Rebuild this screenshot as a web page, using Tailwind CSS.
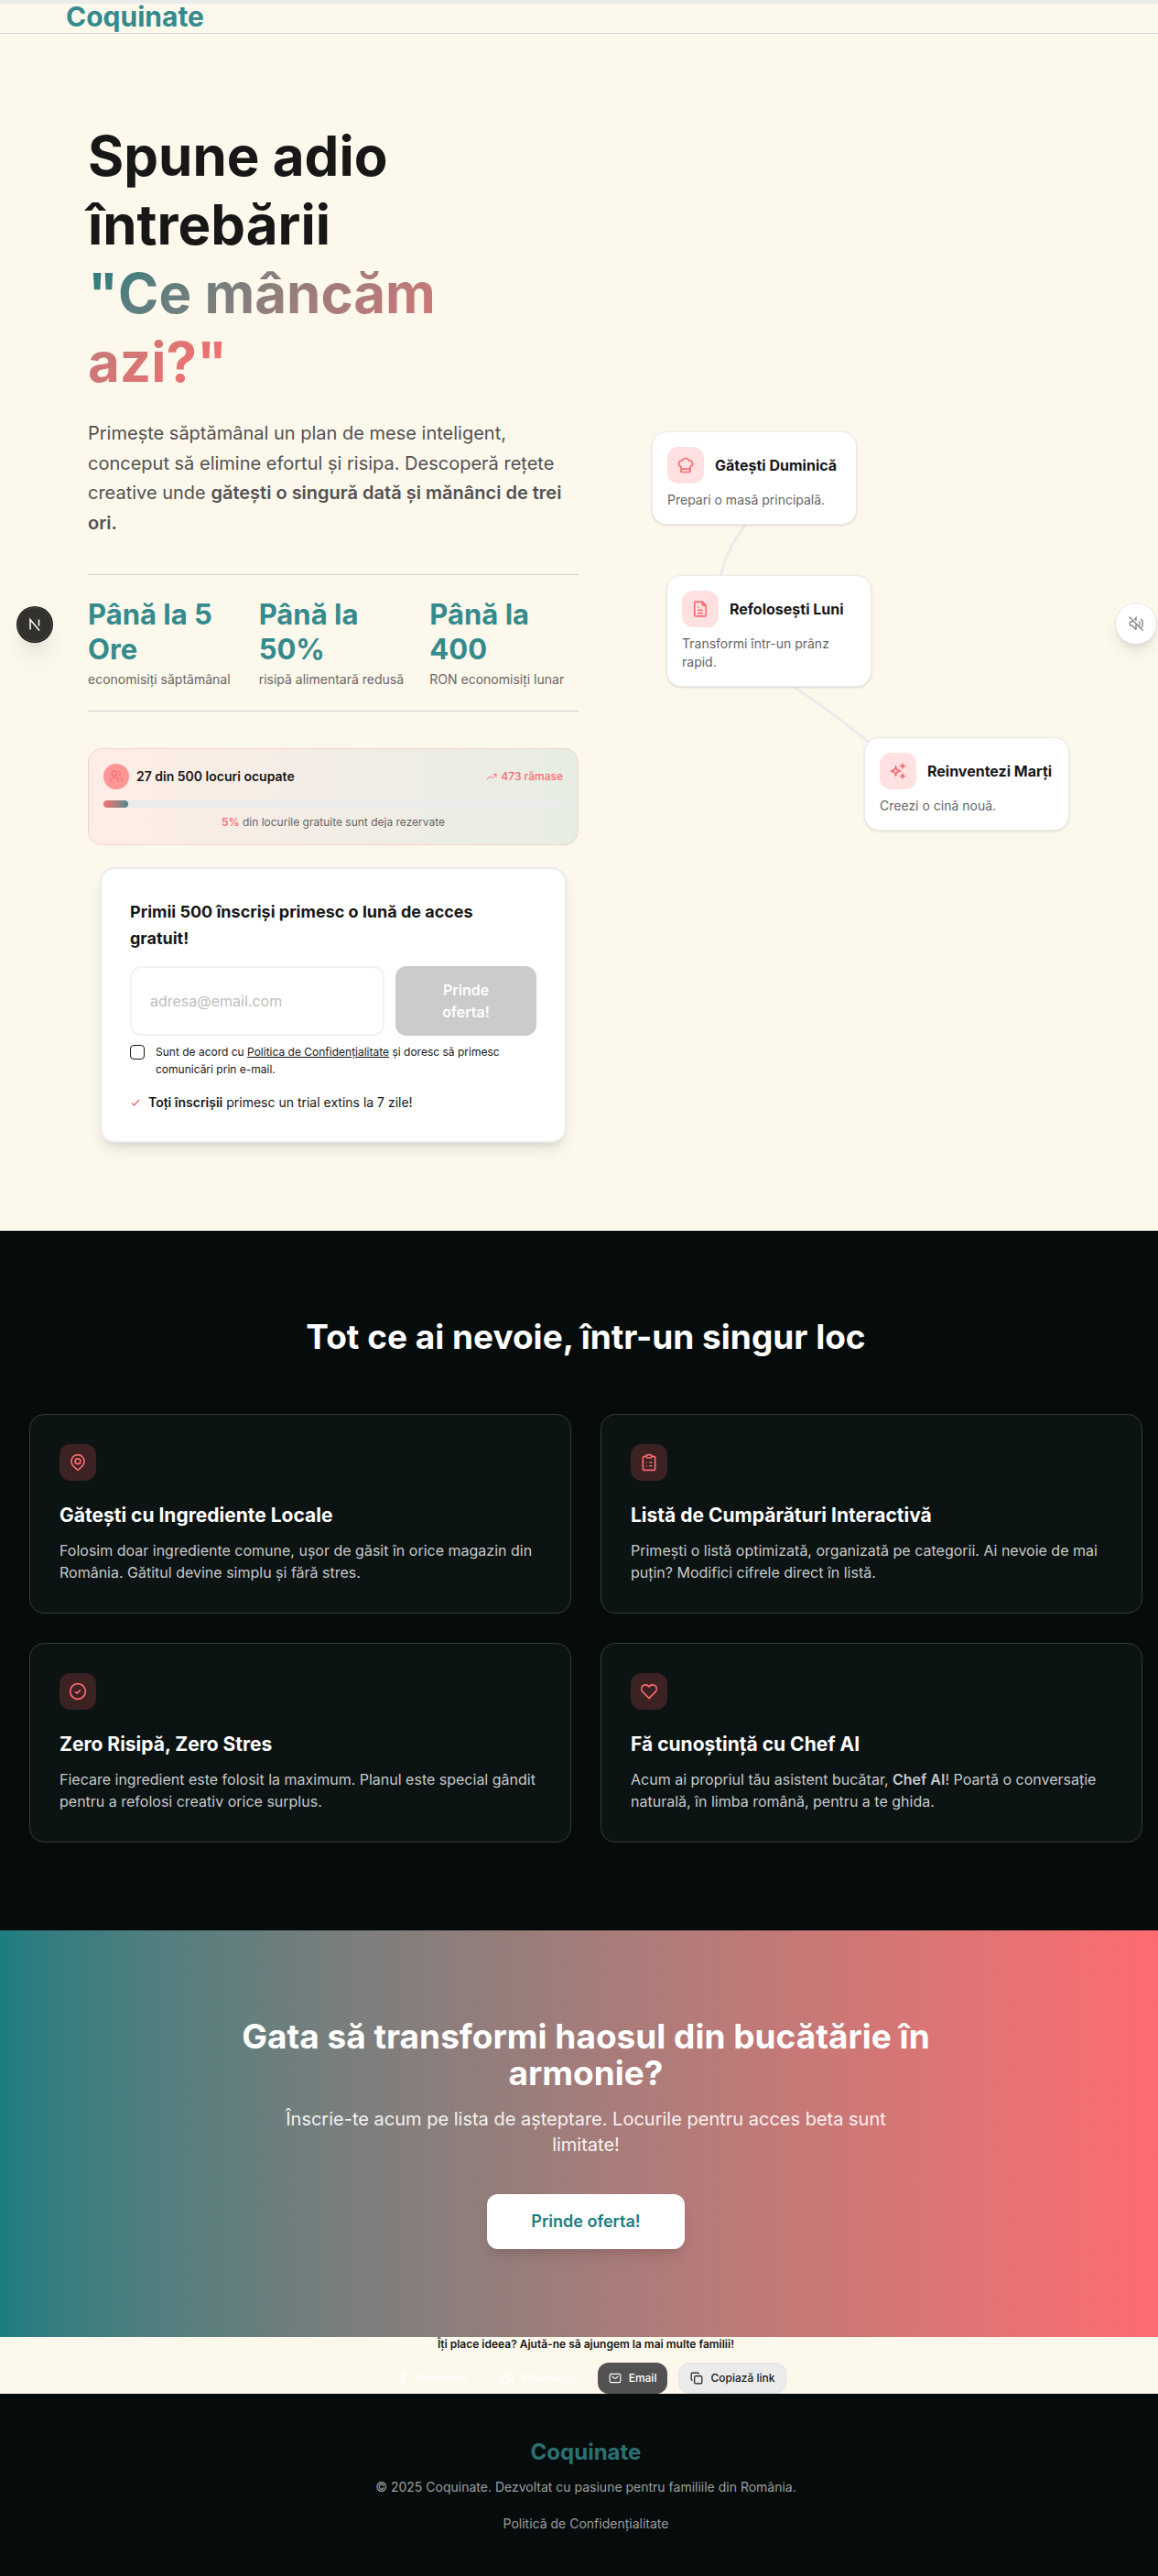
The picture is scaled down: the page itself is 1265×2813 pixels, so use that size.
<!DOCTYPE html>
<html lang="ro">
<head>
<meta charset="utf-8">
<meta name="viewport" content="width=device-width, initial-scale=1">
<title>Coquinate</title>
<script src="https://cdn.jsdelivr.net/npm/@tailwindcss/browser@4"></script>
</head>
<body class="overflow-x-hidden bg-[#fdf8ec] font-['Inter',sans-serif] text-[#171717]">
<svg class="hidden" aria-hidden="true">
  <defs>
    <symbol id="chef" viewBox="0 0 24 24"><path d="M17 21a1 1 0 0 0 1-1v-5.35c0-.457.316-.844.727-1.041a4 4 0 0 0-2.134-7.589 5 5 0 0 0-9.186 0 4 4 0 0 0-2.134 7.588c.411.198.727.585.727 1.041V20a1 1 0 0 0 1 1ZM6 17h12"/></symbol>
    <symbol id="doc" viewBox="0 0 24 24"><path d="M14.500 2.500H6a1.500 1.500 0 0 0-1.500 1.500v16A1.500 1.500 0 0 0 6 21.500h12a1.500 1.500 0 0 0 1.500-1.500V7.500ZM14.500 2.500v3.500a1.500 1.500 0 0 0 1.500 1.500h3.500M8.500 9.500h1.500M8.500 13.500h7M8.500 17.500h7"/></symbol>
    <symbol id="sparkles" viewBox="0 0 24 24"><path d="M9 6.500l1.700 3.800L14.500 12l-3.800 1.700L9 17.500l-1.700-3.800L3.500 12l3.800-1.700ZM18 3.500l.6 1.400 1.400.6-1.400.6L18 7.500l-.6-1.400-1.400-.6 1.400-.6ZM18 16.500l.6 1.400 1.400.6-1.400.6-.6 1.400-.6-1.400-1.400-.6 1.400-.6Z"/></symbol>
    <symbol id="pin" viewBox="0 0 24 24"><path d="M12 22c-1.500-2-8.500-5-8.500-11.500a8.500 8.500 0 0 1 17 0c0 6.500-7 9.500-8.500 11.500Z"/><circle cx="12" cy="10.500" r="3.500"/></symbol>
    <symbol id="clipboard" viewBox="0 0 24 24"><path d="M8.500 4H6a2 2 0 0 0-2 2v14a2 2 0 0 0 2 2h12a2 2 0 0 0 2-2V6a2 2 0 0 0-2-2h-2.500M10.500 2h3a2 2 0 0 1 0 4h-3a2 2 0 0 1 0-4ZM8 12h1M12.500 12H16M8 16.500h1M12.500 16.500H16"/></symbol>
    <symbol id="ring-check" viewBox="0 0 24 24"><circle cx="12" cy="12" r="10"/><path d="m8.500 12.500 2.500 2 4.500-4.500"/></symbol>
    <symbol id="heart" viewBox="0 0 24 24"><path d="M12 21 3.500 12.500a5.500 5.500 0 0 1 0-7.500c2-2 6-2.300 8.500.8C14.500 2.700 18.500 3 20.500 5a5.500 5.500 0 0 1 0 7.500Z"/></symbol>
    <symbol id="people" viewBox="0 0 24 24"><circle cx="9" cy="7" r="4"/><path d="M2.500 21v-3a4 4 0 0 1 4-4h5a4 4 0 0 1 4 4v3M16 3.200a4 4 0 0 1 0 7.600M21.500 21v-3a4 4 0 0 0-3-3.900"/></symbol>
    <symbol id="trend" viewBox="0 0 24 24"><path d="m2 18 6.500-7 5 5L22 7M15.500 7H22v6.500"/></symbol>
    <symbol id="tick" viewBox="0 0 24 24"><path d="m4 13 5 5L20 6"/></symbol>
    <symbol id="mute" viewBox="0 0 24 24"><path d="M2 2l20 20M8 9H5a2 2 0 0 0-2 2v2a2 2 0 0 0 2 2h2l4 5h1V12M9.500 6 12 3.500V8M16 8.500a5 5 0 0 1 0 7M19 5a10 10 0 0 1 0 14"/></symbol>
    <symbol id="facebook" viewBox="0 0 24 24"><path d="M17 2h-3a5 5 0 0 0-5 5v3H6v4h3v8h4v-8h3l1-4h-4V7a1 1 0 0 1 1-1h3Z"/></symbol>
    <symbol id="whatsapp" viewBox="0 0 24 24"><path d="M2.500 21.500 4 16.500a10 10 0 1 1 3.500 3.600ZM8.500 8c0 4 3.500 7.500 7.500 7.500l.5-2-2.500-1-1 1c-1.500-.7-2-1.500-2.500-2.500l1-1-1-2.500Z"/></symbol>
    <symbol id="mail" viewBox="0 0 24 24"><rect x="2" y="4" width="20" height="16" rx="2.500"/><path d="m6 8 4.500 4a2.500 2.500 0 0 0 3 0L18 8"/></symbol>
    <symbol id="copy" viewBox="0 0 24 24"><rect x="8" y="8" width="14" height="14" rx="2.500"/><path d="M4.500 16A2 2 0 0 1 2 14V4.500A2.500 2.500 0 0 1 4.500 2H14a2 2 0 0 1 2 2.500"/></symbol>
  </defs>
</svg>

<!-- The content canvas is wider than the viewport by one scrollbar -->
<div class="-mr-[15px]">
  <div class="h-1 bg-[#ebebeb]"></div>
  <header class="flex h-[33px] items-start border-b border-gray-300 px-[72px]">
    <a href="#" class="text-[30px] leading-7 font-bold text-[#348a8c]">Coquinate</a>
  </header>

  <main>
    <section class="grid grid-cols-2 gap-4 px-24 py-24">
      <div class="flex flex-col">
        <h1 class="text-[60px] leading-[75px] font-bold">Spune adio<br>întrebării<br><span class="bg-linear-135 from-[#1b7d80] to-[#ff6a70] bg-clip-text text-transparent">"Ce mâncăm<br>azi?"</span></h1>
        <p class="mt-6 text-xl leading-relaxed text-[#525252]">Primește săptămânal un plan de mese inteligent, conceput să elimine efortul și risipa. Descoperă rețete creative unde <strong class="font-semibold">gătești o singură dată și mănânci de trei ori.</strong></p>

        <dl class="mt-10 grid grid-cols-3 gap-6 border-y border-[#cfcfcf] py-6">
          <div class="flex flex-col-reverse justify-end gap-1">
            <dt class="text-sm whitespace-nowrap text-[#666]">economisiți săptămânal</dt>
            <dd class="text-[31px] leading-[38px] font-bold text-[#348a8c]">Până la 5<br>Ore</dd>
          </div>
          <div class="flex flex-col-reverse justify-end gap-1">
            <dt class="text-sm whitespace-nowrap text-[#666]">risipă alimentară redusă</dt>
            <dd class="text-[31px] leading-[38px] font-bold text-[#348a8c]">Până la<br>50%</dd>
          </div>
          <div class="flex flex-col-reverse justify-end gap-1">
            <dt class="text-sm whitespace-nowrap text-[#666]">RON economisiți lunar</dt>
            <dd class="text-[31px] leading-[38px] font-bold text-[#348a8c]">Până la<br>400</dd>
          </div>
        </dl>

        <div class="mt-10 rounded-2xl border border-[#ff6a70]/20 bg-linear-to-r from-[#feede6] to-[#e7ede4] p-4">
          <div class="flex items-center gap-2">
            <span class="flex size-7 items-center justify-center rounded-full bg-[#fe9696]"><svg class="size-4 fill-none stroke-[#f97478] stroke-2"><use href="#people"/></svg></span>
            <span class="text-sm font-semibold">27 din 500 locuri ocupate</span>
            <span class="ml-auto flex items-center gap-1 text-xs font-medium text-[#fb6a70]"><svg class="size-3 fill-none stroke-current stroke-2"><use href="#trend"/></svg>473 rămase</span>
          </div>
          <div class="mt-3 h-2 overflow-hidden rounded-full bg-[#ebebeb]"><div class="h-full rounded-full bg-linear-to-r from-[#f56a70] to-[#3f888b]" style="width:5.4%"></div></div>
          <p class="mt-2 text-center text-xs text-[#666]"><strong class="font-semibold text-[#fb6a70]">5%</strong> din locurile gratuite sunt deja rezervate</p>
        </div>

        <form class="mx-[13px] mt-6 rounded-2xl border-2 border-[#ebebeb] bg-white px-[31px] py-8 shadow-lg">
          <h2 class="text-lg leading-[29px] font-bold">Primii 500 înscriși primesc o lună de acces<br>gratuit!</h2>
          <div class="mt-4 flex gap-3">
            <input type="email" aria-label="Adresa de e-mail" placeholder="adresa@email.com" class="h-[76px] min-w-0 flex-1 rounded-xl border-2 border-[#f2f2f2] px-5 text-base placeholder:text-[#bdbdbd]">
            <button type="button" disabled class="w-[154px] rounded-xl bg-[#cbcbcb] px-10 text-base font-semibold text-white">Prinde oferta!</button>
          </div>
          <div class="mt-2 flex items-start gap-3">
            <input id="consent" type="checkbox" class="mt-[2px] size-4 shrink-0 appearance-none rounded-sm border border-[#171717]">
            <label for="consent" class="text-xs leading-[19px]">Sunt de acord cu <a href="#" class="underline">Politica de Confidențialitate</a> și doresc să primesc comunicări prin e-mail.</label>
          </div>
          <p class="mt-[17px] flex items-center gap-2 text-sm"><svg class="size-3 fill-none stroke-[#fb6a70] stroke-3"><use href="#tick"/></svg><span><strong class="font-semibold">Toți înscrișii</strong> primesc un trial extins la 7 zile!</span></p>
        </form>
      </div>

      <!-- Meal journey: cards placed on a free canvas, joined by curves -->
      <div class="relative">
        <svg class="absolute inset-0 size-full fill-none stroke-[#ebebeb] stroke-3"><path d="M173 433Q147 460 138 500M200 605Q250 635 310 685"/></svg>
        <article class="absolute top-[338px] left-16 w-56 rounded-2xl border border-[#ebebeb] bg-white p-4 shadow-sm">
          <div class="flex items-center gap-3"><span class="flex size-10 shrink-0 items-center justify-center rounded-xl bg-[#ffe1e2]"><svg class="size-5 fill-none stroke-[#fb6a70] stroke-2"><use href="#chef"/></svg></span><h3 class="text-base font-bold whitespace-nowrap">Gătești Duminică</h3></div>
          <p class="mt-2 text-sm text-[#666]">Prepari o masă principală.</p>
        </article>
        <article class="absolute top-[495px] left-20 w-56 rounded-2xl border border-[#ebebeb] bg-white p-4 shadow-sm">
          <div class="flex items-center gap-3"><span class="flex size-10 shrink-0 items-center justify-center rounded-xl bg-[#ffe1e2]"><svg class="size-5 fill-none stroke-[#fb6a70] stroke-2"><use href="#doc"/></svg></span><h3 class="text-base font-bold whitespace-nowrap">Refolosești Luni</h3></div>
          <p class="mt-2 text-sm text-[#666]">Transformi într-un prânz rapid.</p>
        </article>
        <article class="absolute top-[672px] right-4 w-56 rounded-2xl border border-[#ebebeb] bg-white p-4 shadow-sm">
          <div class="flex items-center gap-3"><span class="flex size-10 shrink-0 items-center justify-center rounded-xl bg-[#ffe1e2]"><svg class="size-5 fill-none stroke-[#fb6a70] stroke-2"><use href="#sparkles"/></svg></span><h3 class="text-base font-bold whitespace-nowrap">Reinventezi Marți</h3></div>
          <p class="mt-2 text-sm text-[#666]">Creezi o cină nouă.</p>
        </article>
      </div>
    </section>

    <section class="bg-[#060c0c] px-8 py-24 text-white">
      <h2 class="text-center text-[37px] leading-10 font-bold">Tot ce ai nevoie, într-un singur loc</h2>
      <div class="mt-16 grid grid-cols-2 gap-8">
        <article class="rounded-2xl border border-[#353a3a] bg-[#0b1313] p-8">
          <span class="flex size-10 items-center justify-center rounded-xl bg-[#3d2224]"><svg class="size-5 fill-none stroke-[#fb6a70] stroke-2"><use href="#pin"/></svg></span>
          <h3 class="mt-6 text-[21px] leading-7 font-bold">Gătești cu Ingrediente Locale</h3>
          <p class="mt-3 text-[#c7c9c9]">Folosim doar ingrediente comune, ușor de găsit în orice magazin din România. Gătitul devine simplu și fără stres.</p>
        </article>
        <article class="rounded-2xl border border-[#353a3a] bg-[#0b1313] p-8">
          <span class="flex size-10 items-center justify-center rounded-xl bg-[#3d2224]"><svg class="size-5 fill-none stroke-[#fb6a70] stroke-2"><use href="#clipboard"/></svg></span>
          <h3 class="mt-6 text-[21px] leading-7 font-bold">Listă de Cumpărături Interactivă</h3>
          <p class="mt-3 text-[#c7c9c9]">Primești o listă optimizată, organizată pe categorii. Ai nevoie de mai puțin? Modifici cifrele direct în listă.</p>
        </article>
        <article class="rounded-2xl border border-[#353a3a] bg-[#0b1313] p-8">
          <span class="flex size-10 items-center justify-center rounded-xl bg-[#3d2224]"><svg class="size-5 fill-none stroke-[#fb6a70] stroke-2"><use href="#ring-check"/></svg></span>
          <h3 class="mt-6 text-[21px] leading-7 font-bold">Zero Risipă, Zero Stres</h3>
          <p class="mt-3 text-[#c7c9c9]">Fiecare ingredient este folosit la maximum. Planul este special gândit pentru a refolosi creativ orice surplus.</p>
        </article>
        <article class="rounded-2xl border border-[#353a3a] bg-[#0b1313] p-8">
          <span class="flex size-10 items-center justify-center rounded-xl bg-[#3d2224]"><svg class="size-5 fill-none stroke-[#fb6a70] stroke-2"><use href="#heart"/></svg></span>
          <h3 class="mt-6 text-[21px] leading-7 font-bold">Fă cunoștință cu Chef AI</h3>
          <p class="mt-3 text-[#c7c9c9]">Acum ai propriul tău asistent bucătar, <strong class="font-semibold">Chef AI</strong>! Poartă o conversație naturală, în limba română, pentru a te ghida.</p>
        </article>
      </div>
    </section>

    <section class="flex flex-col items-center bg-linear-to-r from-[#1b7d80] to-[#ff6a70] px-8 py-24 text-center text-white">
      <h2 class="max-w-3xl text-[37px] leading-10 font-bold">Gata să transformi haosul din bucătărie în armonie?</h2>
      <p class="mt-4 max-w-2xl text-xl leading-7 text-white/90">Înscrie-te acum pe lista de așteptare. Locurile pentru acces beta sunt limitate!</p>
      <button type="button" class="mt-10 h-[60px] rounded-xl bg-white px-12 text-lg font-semibold text-[#1b7d80] shadow-lg">Prinde oferta!</button>
    </section>

    <section class="text-center text-xs font-semibold">
      <p>Îți place ideea? Ajută-ne să ajungem la mai multe familii!</p>
      <div class="mt-3 flex justify-center gap-3 font-medium">
        <a href="#" class="flex h-[34px] items-center gap-2 rounded-xl px-3 text-white"><svg class="size-[14px] fill-none stroke-current stroke-2"><use href="#facebook"/></svg>Facebook</a>
        <a href="#" class="flex h-[34px] items-center gap-2 rounded-xl px-3 text-white"><svg class="size-[14px] fill-none stroke-current stroke-2"><use href="#whatsapp"/></svg>WhatsApp</a>
        <a href="#" class="flex h-[34px] items-center gap-2 rounded-xl bg-[#525252] px-3 text-white"><svg class="size-[14px] fill-none stroke-current stroke-2"><use href="#mail"/></svg>Email</a>
        <button type="button" class="flex h-[34px] items-center gap-2 rounded-xl border border-[#e3e3e3] bg-[#ebebeb] px-3"><svg class="size-[14px] fill-none stroke-current stroke-2"><use href="#copy"/></svg>Copiază link</button>
      </div>
    </section>
  </main>

  <footer class="flex flex-col items-center bg-[#060c0c] py-12 text-sm text-[#9b9e9e]">
    <a href="#" class="text-2xl font-bold text-[#2a7173]">Coquinate</a>
    <p class="mt-3">© 2025 Coquinate. Dezvoltat cu pasiune pentru familiile din România.</p>
    <a href="#" class="mt-5">Politică de Confidențialitate</a>
  </footer>
</div>

<!-- Floating controls -->
<button type="button" aria-label="Instrumente" class="absolute top-[663px] left-[19px] flex size-[38px] items-center justify-center rounded-full border border-[#4a4944] bg-[#32312d] shadow-xl ring-1 ring-[#171717]"><svg viewBox="0 0 16 16" class="size-4 fill-none stroke-white"><path stroke-width="1.500" d="M3 13.500V2.500L13 14.500M12.500 2.500v7"/></svg></button>
<button type="button" aria-label="Sunet" class="absolute top-[658px] right-px flex size-[46px] items-center justify-center rounded-full border border-[#e5e5e5] bg-white text-[#8e8e8e] shadow-lg"><svg class="size-[18px] fill-none stroke-current stroke-2"><use href="#mute"/></svg></button>
</body>
</html>
